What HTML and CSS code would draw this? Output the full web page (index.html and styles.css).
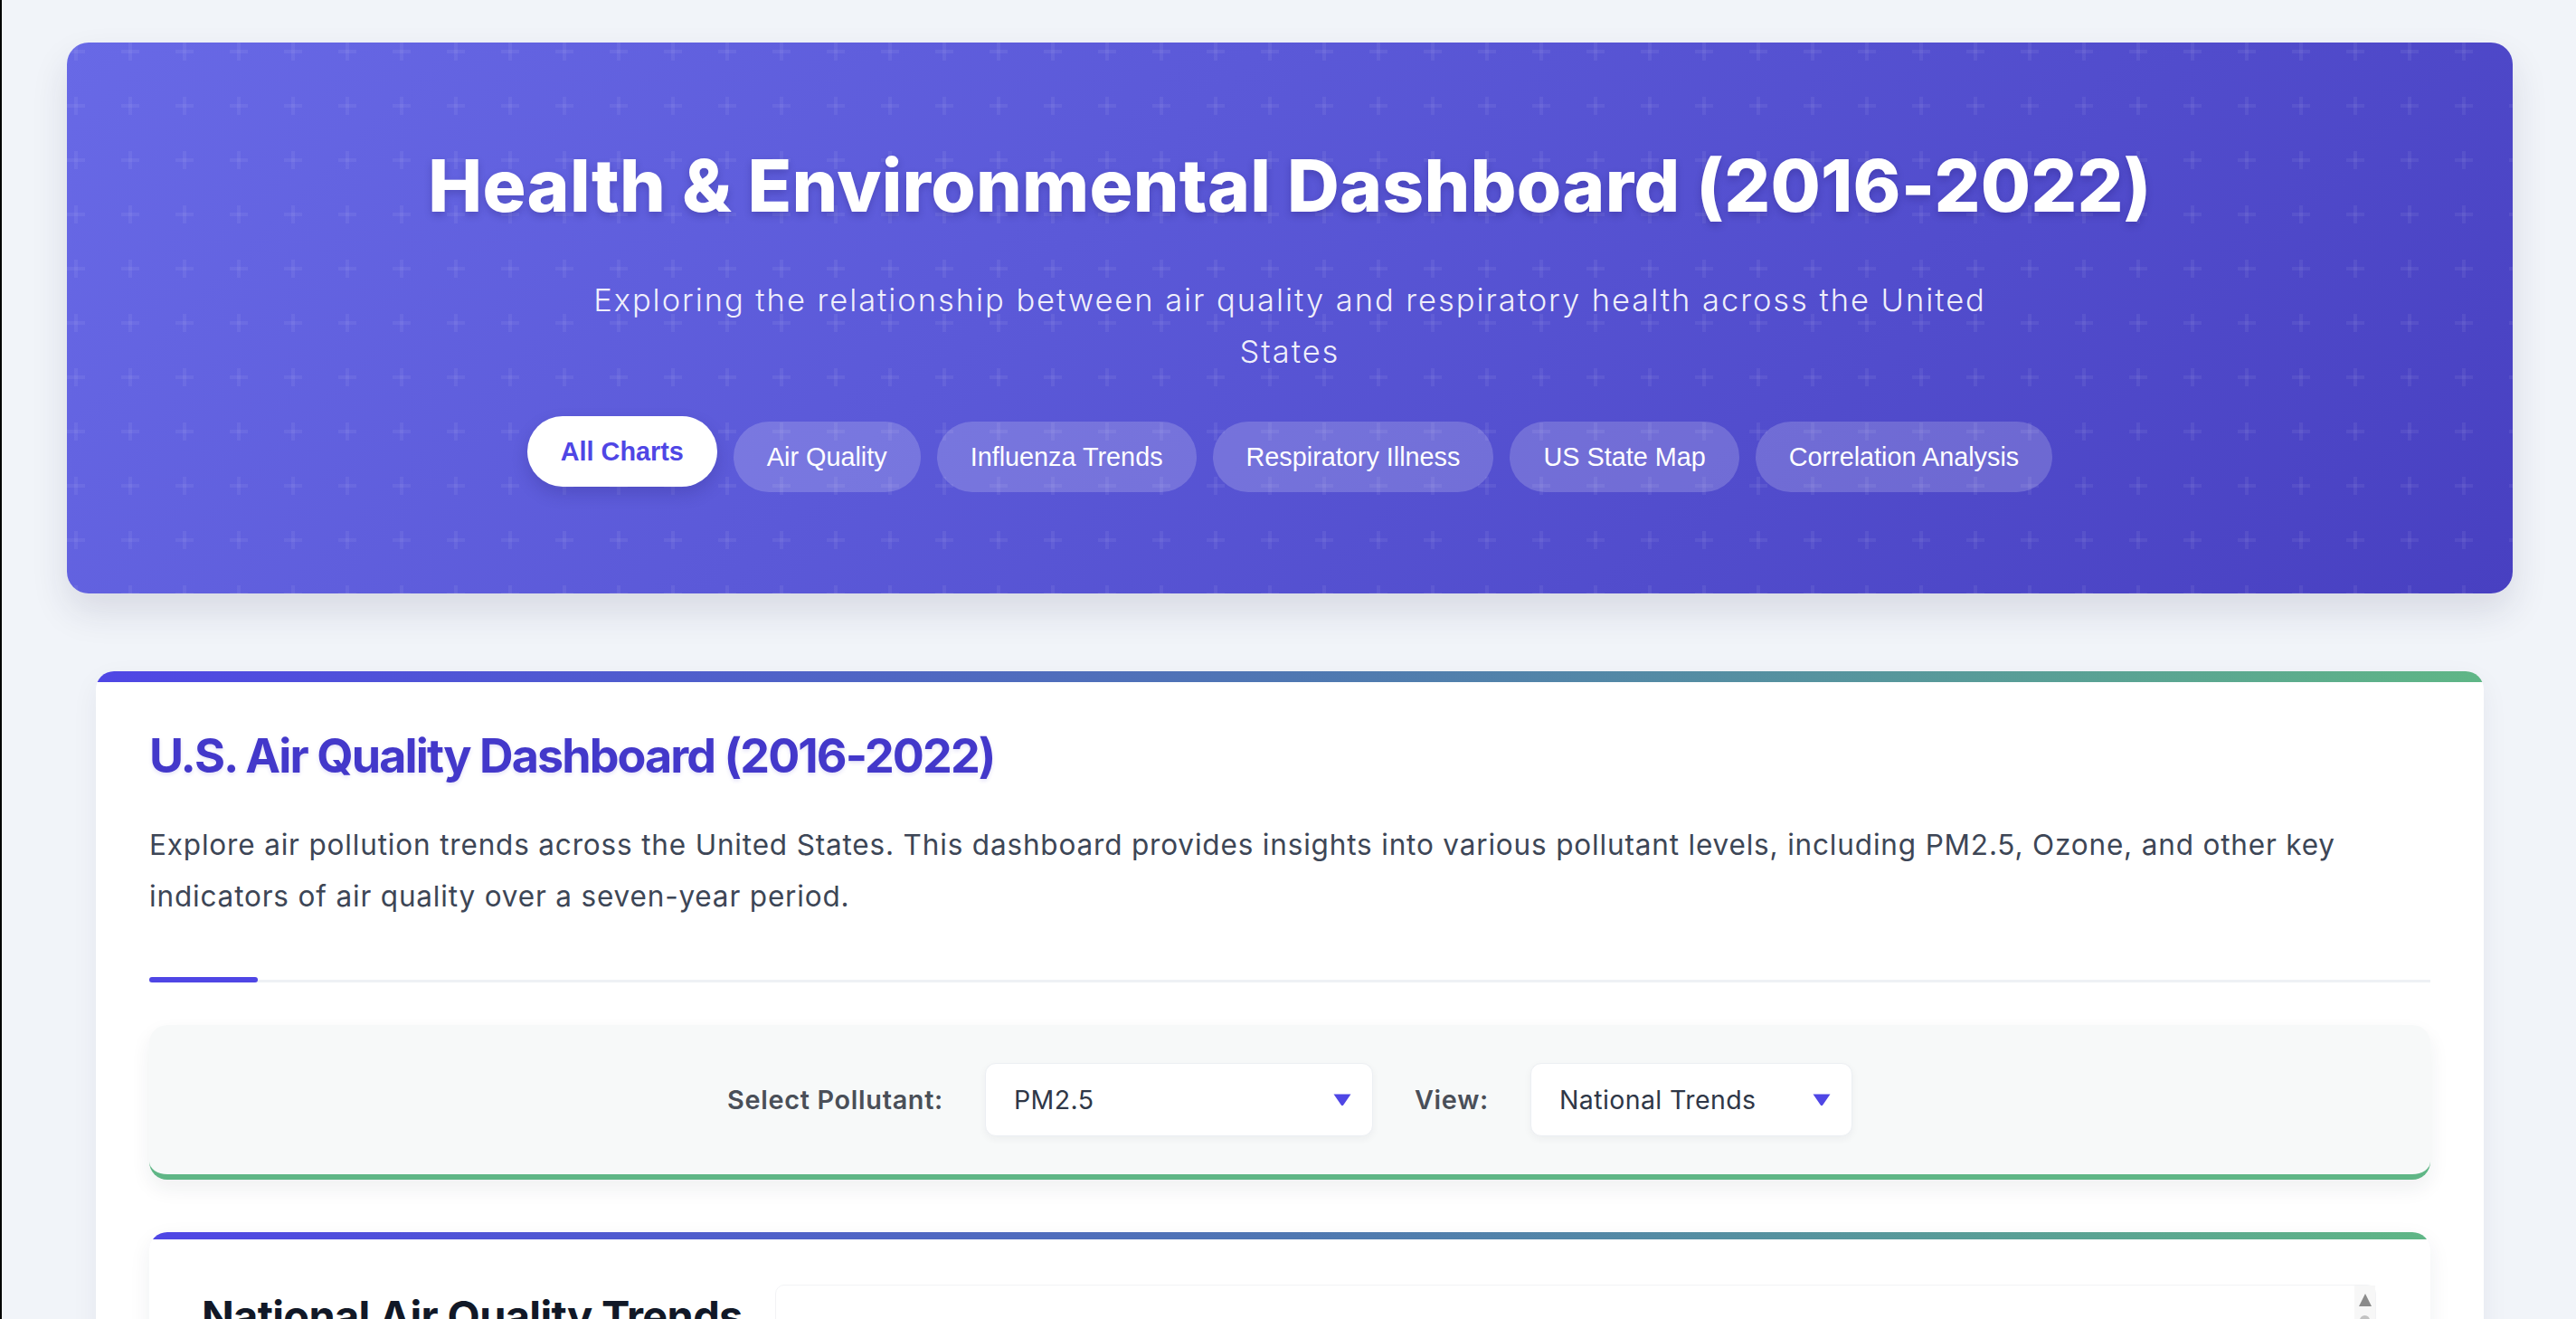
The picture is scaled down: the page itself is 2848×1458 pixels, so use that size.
FILE: index.html
```html
<!DOCTYPE html>
<html lang="en">
<head>
<meta charset="utf-8">
<title>Health &amp; Environmental Dashboard (2016-2022)</title>
<link rel="stylesheet" href="styles.css">
</head>
<body>
<div class="page">
  <header class="hero">
    <svg class="hero-pattern" aria-hidden="true">
      <defs>
        <pattern id="plus" width="60" height="60" patternUnits="userSpaceOnUse">
          <rect x="8" y="0" width="4" height="20"></rect>
          <rect x="0" y="8" width="20" height="4"></rect>
        </pattern>
      </defs>
      <rect width="100%" height="100%" fill="url(#plus)"></rect>
    </svg>
    <div class="hero-inner">
      <h1 class="hero-title">Health &amp; Environmental Dashboard (2016-2022)</h1>
      <p class="hero-subtitle">Exploring the relationship between air quality and respiratory health across the United States</p>
      <nav class="tabs">
        <button class="tab tab-active">All Charts</button>
        <button class="tab">Air Quality</button>
        <button class="tab">Influenza Trends</button>
        <button class="tab">Respiratory Illness</button>
        <button class="tab">US State Map</button>
        <button class="tab">Correlation Analysis</button>
      </nav>
    </div>
  </header>

  <main class="content">
    <section class="card">
      <h2 class="card-title">U.S. Air Quality Dashboard (2016-2022)</h2>
      <p class="card-desc">Explore air pollution trends across the United States. This dashboard provides insights into various pollutant levels, including PM2.5, Ozone, and other key indicators of air quality over a seven-year period.</p>
      <div class="divider"><span class="divider-accent"></span></div>

      <div class="controls">
        <label class="control-label" for="pollutant">Select Pollutant:</label>
        <div class="select-wrap select-pollutant">
          <select id="pollutant" class="select">
            <option>PM2.5</option>
            <option>Ozone</option>
            <option>Nitrogen Dioxide</option>
            <option>Carbon Monoxide</option>
          </select>
          <svg class="select-arrow" viewBox="0 0 22 15" aria-hidden="true"><path d="M1.5 1.5 H20.5 L12.2 13.6 Q11 15 9.8 13.6 Z"></path></svg>
        </div>
        <label class="control-label" for="view">View:</label>
        <div class="select-wrap select-view">
          <select id="view" class="select">
            <option>National Trends</option>
            <option>Regional Comparison</option>
          </select>
          <svg class="select-arrow" viewBox="0 0 22 15" aria-hidden="true"><path d="M1.5 1.5 H20.5 L12.2 13.6 Q11 15 9.8 13.6 Z"></path></svg>
        </div>
      </div>

      <div class="chart-card">
        <div class="chart-head">
          <h3 class="chart-title">National Air Quality Trends</h3>
          <div class="chart-tools">
            <div class="scrollbar"><span class="scroll-up"></span><span class="scroll-thumb"></span></div>
          </div>
        </div>
      </div>
    </section>
  </main>
</div>
</body>
</html>
```

FILE: styles.css
```css
* { box-sizing: border-box; }

html, body { margin: 0; padding: 0; }

body {
  background: #f1f4f9;
  border-left: 2px solid #050505;
  font-family: Inter, "Open Sans", sans-serif;
  min-height: 100vh;
}

.page {
  padding: 47px 70px 80px 72px;
}

/* ---------- Hero ---------- */
.hero {
  position: relative;
  overflow: hidden;
  border-radius: 24px;
  background: linear-gradient(135deg, #6869e6 0%, #5b59d8 40%, #4840c1 100%);
  box-shadow: 0 20px 40px rgba(30, 35, 70, 0.12);
  padding: 110px 40px 112px;
  text-align: center;
}

.hero-pattern {
  position: absolute;
  inset: 0;
  width: 100%;
  height: 100%;
  fill: rgba(255, 255, 255, 0.06);
}

.hero-inner {
  position: relative;
}

.hero-title {
  margin: 0 0 50px;
  color: #ffffff;
  font-family: Inter, sans-serif;
  font-weight: 800;
  font-size: 80px;
  line-height: 1.2;
  letter-spacing: 0.25px;
  text-shadow: 0 4px 8px rgba(20, 10, 80, 0.22);
}

.hero-subtitle {
  margin: 0 auto 49px;
  max-width: 1600px;
  color: rgba(255, 255, 255, 0.92);
  font-family: Inter, sans-serif;
  font-weight: 300;
  font-size: 34.5px;
  line-height: 57px;
  letter-spacing: 1.95px;
}

.tabs {
  display: flex;
  justify-content: center;
  align-items: flex-start;
  gap: 18px;
}

.tab {
  height: 78px;
  padding: 0 37px;
  border: none;
  border-radius: 40px;
  background: rgba(255, 255, 255, 0.18);
  color: #ffffff;
  font-family: "Liberation Sans", Arial, sans-serif;
  font-size: 28.8px;
  font-weight: 400;
  cursor: pointer;
}

.tab-active {
  background: #ffffff;
  color: #4f46e5;
  font-weight: 700;
  transform: translateY(-6px);
  box-shadow: 0 8px 18px rgba(20, 15, 90, 0.18);
}

/* ---------- Content card ---------- */
.content {
  margin: 86px 32px 0;
}

.card {
  position: relative;
  overflow: hidden;
  background: #ffffff;
  border-radius: 20px;
  box-shadow: 0 10px 30px rgba(30, 40, 70, 0.06);
  padding: 63px 59px 60px;
}

.card::before {
  content: "";
  position: absolute;
  left: 0;
  right: 0;
  top: 0;
  height: 12px;
  background: linear-gradient(90deg, #4f46e5 0%, #4f77b2 50%, #5fb686 100%);
}

.card-title {
  margin: 0 0 38px;
  color: #4338ca;
  font-family: Inter, sans-serif;
  font-weight: 700;
  font-size: 52px;
  line-height: 1.2;
  letter-spacing: -1.9px;
  text-shadow: 0 2px 4px rgba(67, 56, 202, 0.15);
}

.card-desc {
  margin: 0;
  color: #3d4656;
  font-family: Inter, sans-serif;
  font-weight: 400;
  font-size: 31.5px;
  line-height: 57px;
  letter-spacing: 0.83px;
}

.divider {
  margin-top: 61px;
  height: 6px;
  display: flex;
  align-items: flex-end;
  background: linear-gradient(to top, #eef1f5 3px, transparent 3px);
}

.divider-accent {
  width: 120px;
  height: 6px;
  border-radius: 3px;
  background: #4f46e5;
}

/* ---------- Controls ---------- */
.controls {
  margin-top: 47px;
  display: flex;
  justify-content: center;
  align-items: center;
  gap: 46px;
  padding: 42px;
  background: #f7f9f9;
  border-radius: 20px;
  border-bottom: 6px solid #5fb686;
  box-shadow: 0 10px 22px rgba(30, 40, 60, 0.07);
}

.control-label {
  color: #4a4f58;
  font-family: Inter, sans-serif;
  font-weight: 600;
  font-size: 28.8px;
  letter-spacing: 0.7px;
}

.select-wrap {
  position: relative;
  height: 81px;
}

.select-pollutant { width: 429px; }
.select-view { width: 356px; }

.select {
  appearance: none;
  -webkit-appearance: none;
  width: 100%;
  height: 100%;
  padding: 0 60px 0 31px;
  border: 1px solid #eceff3;
  border-radius: 12px;
  background: #ffffff;
  box-shadow: 0 3px 8px rgba(30, 40, 60, 0.05);
  color: #2f3747;
  font-family: Inter, sans-serif;
  font-size: 28.5px;
  letter-spacing: 0.4px;
  outline: none;
}

.select-arrow {
  position: absolute;
  right: 23px;
  top: 50%;
  width: 22px;
  height: 15px;
  margin-top: -8px;
  fill: #4f46e5;
  pointer-events: none;
}

/* ---------- Chart card ---------- */
.chart-card {
  position: relative;
  overflow: hidden;
  margin-top: 58px;
  background: #ffffff;
  border-radius: 20px;
  box-shadow: 0 8px 24px rgba(30, 40, 70, 0.07);
  padding: 58px 60px 60px 58px;
}

.chart-card::before {
  content: "";
  position: absolute;
  left: 0;
  right: 0;
  top: 0;
  height: 8px;
  background: linear-gradient(90deg, #4f46e5 0%, #4f77b2 50%, #5fb686 100%);
}

.chart-head {
  display: flex;
  align-items: flex-start;
  gap: 36px;
}

.chart-title {
  margin: 7px 0 0;
  color: #111827;
  font-family: Inter, sans-serif;
  font-weight: 700;
  font-size: 47px;
  line-height: 1.2;
  letter-spacing: -0.7px;
  white-space: nowrap;
}

.chart-tools {
  flex: 1;
  height: 420px;
  display: flex;
  justify-content: flex-end;
  border: 1px solid #f2f3f5;
  border-radius: 10px;
}

.scrollbar {
  width: 23px;
  background: #f7f7f7;
  display: flex;
  flex-direction: column;
  align-items: center;
  padding-top: 9px;
  gap: 10px;
}

.scroll-up {
  width: 0;
  height: 0;
  border-left: 7px solid transparent;
  border-right: 7px solid transparent;
  border-bottom: 14px solid #8b8b8b;
}

.scroll-thumb {
  width: 11px;
  height: 60px;
  border-radius: 6px;
  background: #c2c2c2;
}
```
